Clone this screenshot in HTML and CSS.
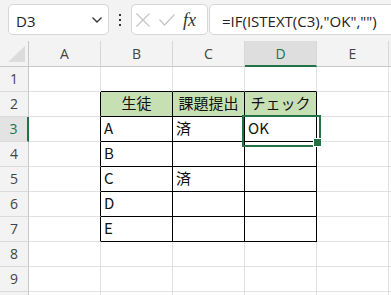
FILE: index.html
```html
<!DOCTYPE html>
<html lang="ja">
<head>
<meta charset="utf-8">
<title>Excel</title>
<link rel="stylesheet" href="styles.css">
</head>
<body>
<div class="toolbar">
  <div class="namebox">
    <span class="ref">D3</span>
    <svg class="chev" width="10" height="6" viewBox="0 0 10 6"><polyline points="0.5,0.5 5,5 9.5,0.5" fill="none" stroke="#333" stroke-width="1.3"/></svg>
  </div>
  <div class="dots"><i></i><i></i><i></i></div>
  <div class="fxbox">
    <svg class="ico" width="14" height="14" viewBox="0 0 14 14"><path d="M0.5 0.5 L13.5 13.5 M13.5 0.5 L0.5 13.5" stroke="#c4c4c4" stroke-width="1.2" fill="none"/></svg>
    <svg class="ico" width="16" height="12" viewBox="0 0 16 12"><polyline points="0.5,5.5 5.5,11 15.5,0.5" stroke="#c4c4c4" stroke-width="1.2" fill="none"/></svg>
    <span class="fx">fx</span>
  </div>
  <div class="formula">=IF(ISTEXT(C3),"OK","")</div>
</div>
<div class="sheet">
  <div class="corner"><svg width="28" height="25" viewBox="0 0 28 25"><polygon points="8,21 25,21 25,5" fill="#dcdcdc"/></svg></div>
  <div class="ch">A</div><div class="ch">B</div><div class="ch">C</div><div class="ch on">D</div><div class="ch">E</div><div class="ch"></div>

  <div class="rh">1</div><div class="c"></div><div class="c tt"></div><div class="c tt"></div><div class="c tt"></div><div class="c"></div><div class="c"></div>
  <div class="rh">2</div><div class="c tl"></div><div class="c t hd ctr">生徒</div><div class="c t hd ctr">課題提出</div><div class="c t hd ctr">チェック</div><div class="c"></div><div class="c"></div>
  <div class="rh on">3</div><div class="c tl"></div><div class="c t">A</div><div class="c t">済</div><div class="c t sel">OK</div><div class="c"></div><div class="c"></div>
  <div class="rh">4</div><div class="c tl"></div><div class="c t">B</div><div class="c t"></div><div class="c t"></div><div class="c"></div><div class="c"></div>
  <div class="rh">5</div><div class="c tl"></div><div class="c t">C</div><div class="c t">済</div><div class="c t"></div><div class="c"></div><div class="c"></div>
  <div class="rh">6</div><div class="c tl"></div><div class="c t">D</div><div class="c t"></div><div class="c t"></div><div class="c"></div><div class="c"></div>
  <div class="rh">7</div><div class="c tl"></div><div class="c t">E</div><div class="c t"></div><div class="c t"></div><div class="c"></div><div class="c"></div>
  <div class="rh">8</div><div class="c"></div><div class="c"></div><div class="c"></div><div class="c"></div><div class="c"></div><div class="c"></div>
  <div class="rh">9</div><div class="c"></div><div class="c"></div><div class="c"></div><div class="c"></div><div class="c"></div><div class="c"></div>
  <div class="rh"></div><div class="c"></div><div class="c"></div><div class="c"></div><div class="c"></div><div class="c"></div><div class="c"></div>
</div>
</body>
</html>
```
FILE: styles.css
```css
* { box-sizing: border-box; }
html, body {
  margin: 0;
  padding: 0;
  width: 391px;
  height: 295px;
  overflow: hidden;
  background: #f3f3f3;
}
body {
  font-family: "Open Sans", "Noto Sans", sans-serif;
}
.toolbar {
  height: 41px;
  display: flex;
  align-items: flex-start;
  padding-top: 4px;
  background: #f3f3f3;
}
.toolbar > * { flex-shrink: 0; }
.namebox {
  margin-left: 8px;
  width: 101px;
  height: 31px;
  background: #fff;
  border: 1px solid #d6d6d6;
  border-radius: 5px;
  display: flex;
  align-items: center;
  justify-content: space-between;
  padding: 3px 6px 0 7px;
}
.ref {
  font-size: 15px;
  color: #222;
  line-height: 15px;
}
.chev { margin-top: -2px; }
.dots {
  width: 22px;
  height: 31px;
  display: flex;
  flex-direction: column;
  align-items: center;
  justify-content: center;
  gap: 3px;
}
.dots i {
  display: block;
  width: 2px;
  height: 2px;
  background: #333;
}
.fxbox {
  width: 77px;
  height: 31px;
  background: #fff;
  border: 1px solid #d6d6d6;
  border-radius: 5px;
  display: flex;
  align-items: center;
  padding-left: 4px;
  gap: 9px;
}
.ico { display: block; }
.fx {
  font-family: "Liberation Serif", "DejaVu Serif", serif;
  font-style: italic;
  font-size: 18px;
  color: #333;
  line-height: 18px;
  margin-left: -1px;
}
.formula {
  margin-left: 1px;
  width: 260px;
  height: 31px;
  background: #fff;
  border: 1px solid #d6d6d6;
  border-radius: 5px;
  padding: 3px 0 0 12px;
  font-size: 15px;
  line-height: 26px;
  color: #222;
  white-space: nowrap;
}
.sheet {
  display: grid;
  grid-template-columns: 29px 72px 72px 72px 72px 72px 1fr;
  grid-template-rows: 26px repeat(10, 25px);
  background: #fff;
}
.corner {
  background: #f3f3f3;
  border-right: 1px solid #c8c8c8;
  border-bottom: 1px solid #c8c8c8;
}
.corner svg { display: block; }
.ch {
  background: #f3f3f3;
  border-right: 1px solid #d8d8d8;
  border-bottom: 1px solid #c8c8c8;
  display: flex;
  align-items: center;
  justify-content: center;
  font-size: 14px;
  line-height: 14px;
  color: #444;
  padding-top: 1px;
}
.ch.on {
  background: #dedede;
  color: #217346;
  border-bottom: 2px solid #217346;
}
.rh {
  background: #f3f3f3;
  border-right: 1px solid #c8c8c8;
  border-bottom: 1px solid #dadada;
  display: flex;
  align-items: center;
  justify-content: center;
  font-size: 14px;
  line-height: 14px;
  color: #444;
}
.rh.on {
  background: #e3e3e3;
  color: #217346;
  border-right: 2px solid #217346;
}
.c {
  border-right: 1px solid #e1e1e1;
  border-bottom: 1px solid #e1e1e1;
  font-family: "Noto Sans CJK JP", "Noto Sans", sans-serif;
  font-size: 15px;
  line-height: 15px;
  color: #111;
  display: flex;
  align-items: flex-end;
  padding: 0 3px 6px 3px;
  white-space: nowrap;
}
.tl { border-right-color: #000; }
.tt { border-bottom-color: #000; }
.t {
  border-right-color: #000;
  border-bottom-color: #000;
}
.hd { background: #c6e0b4; }
.ctr { justify-content: center; }
.sel { position: relative; }
.sel::after {
  content: "";
  position: absolute;
  left: -3px;
  top: -2px;
  width: 75px;
  height: 28px;
  border: 2px solid #217346;
}
.sel::before {
  content: "";
  position: absolute;
  left: 68px;
  top: 21px;
  width: 7px;
  height: 7px;
  background: #217346;
  border: 1px solid #fff;
  z-index: 2;
}
```
